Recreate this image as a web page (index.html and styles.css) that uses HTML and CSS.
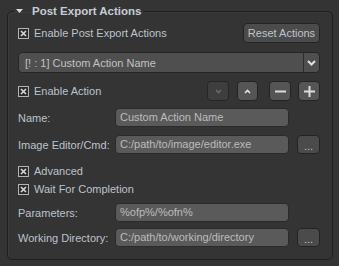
FILE: index.html
```html
<!DOCTYPE html>
<html lang="en">
<head>
  <meta charset="UTF-8">
  <title>Post Export Actions</title>
  <link rel="stylesheet" href="styles.css">
</head>
<body>
  <fieldset class="group">
    <legend class="group-title">
      <svg class="caret" width="7" height="4" viewBox="0 0 7 4"><polygon points="0,0 7,0 3.5,4" fill="#d6d9df"/></svg>
      Post Export Actions
    </legend>

    <div class="row row-top">
      <label class="check">
        <svg width="11" height="11" viewBox="0 0 11 11"><rect x="0.5" y="0.5" width="10" height="10" fill="#2c2c2c" stroke="#b4b4b4"/><path d="M3 3 L8 8 M8 3 L3 8" stroke="#d4d4d4" stroke-width="1.7"/></svg>
        Enable Post Export Actions
      </label>
      <button class="btn btn-reset">Reset Actions</button>
    </div>

    <div class="row combo">
      <span class="combo-text">[! : 1] Custom Action Name</span>
      <span class="combo-arrow">
        <svg width="9" height="6" viewBox="0 0 9 6"><path d="M1 1 L4.5 4.5 L8 1" fill="none" stroke="#e0e0e0" stroke-width="2"/></svg>
      </span>
    </div>

    <div class="row row-action">
      <label class="check">
        <svg width="11" height="11" viewBox="0 0 11 11"><rect x="0.5" y="0.5" width="10" height="10" fill="#2c2c2c" stroke="#b4b4b4"/><path d="M3 3 L8 8 M8 3 L3 8" stroke="#d4d4d4" stroke-width="1.7"/></svg>
        Enable Action
      </label>
      <div class="tools">
        <button class="btn icon-btn disabled">
          <svg width="7" height="5" viewBox="0 0 7 5"><path d="M1 1 L3.5 3.5 L6 1" fill="none" stroke="#6a6a6a" stroke-width="1.6"/></svg>
        </button>
        <button class="btn icon-btn up">
          <svg width="7" height="5" viewBox="0 0 7 5"><path d="M1 4 L3.5 1.5 L6 4" fill="none" stroke="#e4e4e4" stroke-width="1.6"/></svg>
        </button>
        <button class="btn icon-btn minus">
          <svg width="11" height="11" viewBox="0 0 11 11"><rect x="0" y="4.5" width="11" height="2" fill="#dcdcdc"/></svg>
        </button>
        <button class="btn icon-btn plus">
          <svg width="11" height="11" viewBox="0 0 11 11"><rect x="0" y="4.5" width="11" height="2" fill="#dcdcdc"/><rect x="4.5" y="0" width="2" height="11" fill="#dcdcdc"/></svg>
        </button>
      </div>
    </div>

    <div class="row field r-name">
      <span class="lbl">Name:</span>
      <span class="input">Custom Action Name</span>
    </div>

    <div class="row field r-cmd">
      <span class="lbl">Image Editor/Cmd:</span>
      <span class="input">C:/path/to/image/editor.exe</span>
      <button class="btn browse">...</button>
    </div>

    <div class="row r-adv">
      <label class="check">
        <svg width="11" height="11" viewBox="0 0 11 11"><rect x="0.5" y="0.5" width="10" height="10" fill="#2c2c2c" stroke="#b4b4b4"/><path d="M3 3 L8 8 M8 3 L3 8" stroke="#d4d4d4" stroke-width="1.7"/></svg>
        Advanced
      </label>
    </div>

    <div class="row r-wait">
      <label class="check">
        <svg width="11" height="11" viewBox="0 0 11 11"><rect x="0.5" y="0.5" width="10" height="10" fill="#2c2c2c" stroke="#b4b4b4"/><path d="M3 3 L8 8 M8 3 L3 8" stroke="#d4d4d4" stroke-width="1.7"/></svg>
        Wait For Completion
      </label>
    </div>

    <div class="row field r-params">
      <span class="lbl">Parameters:</span>
      <span class="input">%ofp%/%ofn%</span>
    </div>

    <div class="row field r-dir">
      <span class="lbl">Working Directory:</span>
      <span class="input">C:/path/to/working/directory</span>
      <button class="btn browse">...</button>
    </div>
  </fieldset>
</body>
</html>
```

FILE: styles.css
```css
body { margin: 0; padding-top: 4px; background: #343434; font-family: "Liberation Sans", Arial, sans-serif; font-size: 11px; color: #bcc3ce; }
.group { margin: 0 6px 0 7px; padding: 5px 12px 12px 10px; border: 1px solid #1f1f1f; border-radius: 5px; box-shadow: inset 1px 1px 0 #3b3b3b; }
.group-title { margin-left: -4px; padding: 0 2px 0 2px; line-height: 14px; height: 14px; font-weight: bold; font-size: 11.5px; color: #c6ccd7; display: flex; align-items: center; }
.caret { margin-right: 9px; }

.row { display: flex; align-items: center; }
.row-top { height: 20px; justify-content: space-between; }
.check { display: flex; align-items: center; gap: 5px; }

.btn { font-family: inherit; font-size: 11px; color: #bfc4cc; background: #4b4b4b; border: 1px solid #232323; border-radius: 4px; padding: 0; box-sizing: border-box; display: flex; align-items: center; justify-content: center; }
.btn-reset { width: 77px; height: 20px; }

.combo { margin-top: 9px; height: 21px; box-sizing: border-box; background: #4f4f4f; border: 1px solid #252525; border-radius: 4px; }
.combo-text { flex: 1; padding-left: 6px; color: #c2c2c2; }
.combo-arrow { width: 15px; height: 100%; border-left: 1px solid #2c2c2c; display: flex; align-items: center; justify-content: center; }

.row-action { margin-top: 8px; height: 20px; justify-content: space-between; }
.tools { display: flex; }
.icon-btn { width: 22px; height: 20px; background: #555555; }
.icon-btn.disabled { background: #3e3e3e; border-color: #262626; }
.icon-btn.up { margin-left: 8px; width: 21px; }
.icon-btn.minus { margin-left: 11px; }
.icon-btn.plus { margin-left: 7px; }

.field { height: 19px; }
.lbl { width: 97px; }
.input { width: 174px; height: 19px; box-sizing: border-box; padding-left: 4px; line-height: 17px; background: #5a5a5a; border: 1px solid #2a2a2a; border-radius: 4px; color: #bcbcbc; }
.browse { width: 23px; height: 19px; margin-left: 8px; background: #4b4b4b; align-items: flex-end; padding-bottom: 3px; line-height: 8px; }

.r-name { margin-top: 7px; }
.r-cmd { margin-top: 8px; }
.r-adv { margin-top: 10px; height: 14px; }
.r-wait { margin-top: 4px; height: 14px; }
.r-params { margin-top: 7px; }
.r-dir { margin-top: 6px; }
```
